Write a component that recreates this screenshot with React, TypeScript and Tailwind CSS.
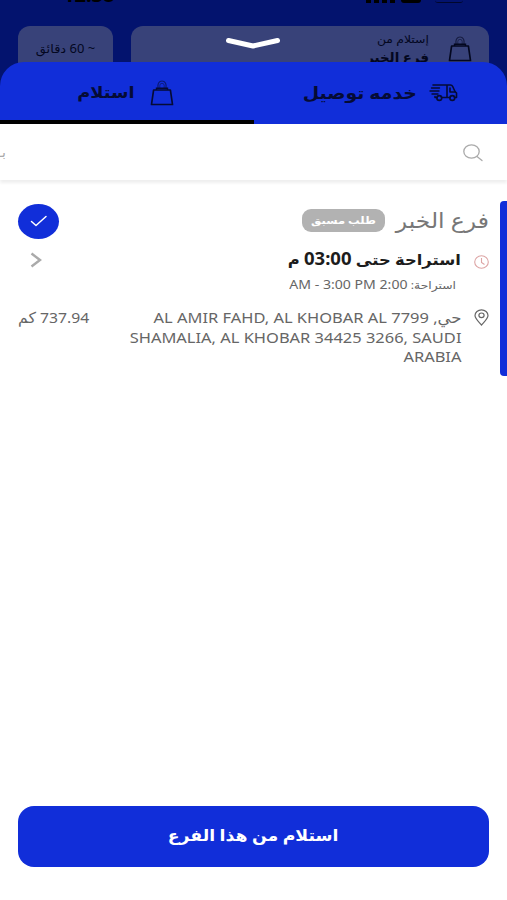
import type { ReactNode } from 'react';

const BagIcon = ({ className }: { className?: string }) => (
    <svg className={className} width="24" height="26" viewBox="0 0 24 26" fill="none" stroke="currentColor">
        <path d="M3.6 10h16.8L22.5 24.500h-21z" strokeWidth="1.7" strokeLinejoin="round" />
        <path d="M6.500 10V8.300h11V10" strokeWidth="1.4" />
        <path d="M8 8.300C7.200 4 9 1 12 1s4.800 3 4 7.300" strokeWidth="1.2" opacity="0.6" />
        <path d="M9.800 8V5.500a2.200 2.200 0 0 1 4.400 0V8" strokeWidth="0.8" opacity="0.6" />
    </svg>
);

const TruckIcon = () => (
    <svg className="mt-px" width="29" height="19" viewBox="0 0 29 19" fill="none" stroke="currentColor" strokeWidth="1.6" strokeLinejoin="round" strokeLinecap="round">
        <path d="M4 2h14v12.500h-5.500M18 2h3.500q1.500 0 2.200 1.500L26 8.500l1.500 1.500v4.500h-2M21 14.500h-4.500M8 14.500H6v-1" />
        <path d="M21 5v4h5" />
        <circle cx="10.300" cy="15" r="2.400" />
        <circle cx="23.300" cy="15" r="2.400" />
        <path d="M2.500 5h8M1 8h9M3 11h6" strokeWidth="1.400" />
    </svg>
);

interface TextProps {
    className: string;
    children: ReactNode;
}

const Text = ({ className, children }: TextProps) => (
    <span className={`block whitespace-nowrap ${className}`}>{children}</span>
);

const Header = () => (
    <div className="relative h-24 overflow-hidden bg-[#03136e] text-[#03071f]">
        <div dir="ltr" className="absolute left-[63px] -top-[17px] text-[20px] leading-6 font-bold text-black">
            12:38
        </div>
        <div className="absolute right-[44px] top-0 flex h-1 items-start gap-3.5">
            <div className="h-[3px] w-7 rounded-b border-b border-black/60" />
            <div className="h-[3px] w-5 rounded-b bg-black" />
            <div className="-mr-2 flex gap-[3px]">
                <div className="h-[3px] w-[5px] bg-black" />
                <div className="h-[3px] w-[5px] bg-black" />
                <div className="h-[3px] w-[5px] bg-black" />
                <div className="h-[3px] w-[5px] bg-black" />
            </div>
        </div>
        <div className="flex gap-[18px] px-[18px] pt-[26px]">
            <div className="flex h-20 flex-1 rounded-xl bg-[#384279] pr-[17px] pt-2.5">
                <BagIcon className="h-[26px] w-6" />
                <div className="pr-[19px]">
                    <Text className="-mt-[5px] origin-right scale-x-[1.13] text-[11px] leading-4">إستلام من</Text>
                    <Text className="origin-right scale-x-[1.03] text-[13px] leading-5 font-bold">فرع الخبر</Text>
                </div>
            </div>
            <div className="flex h-20 w-[95px] justify-center rounded-xl bg-[#384279] pt-[15px]">
                <Text className="scale-x-[1.08] text-xs leading-4">~ 60 دقائق</Text>
            </div>
        </div>
        <svg className="absolute left-[225px] top-[36px]" width="56" height="14" viewBox="0 0 56 14" fill="none" stroke="white" strokeWidth="5" strokeLinecap="round" strokeLinejoin="round">
            <path d="M3.500 4.500 28 10 52.500 4.500" />
        </svg>
    </div>
);

const Tabs = () => (
    <div className="relative -mt-[34px] flex h-[62px] rounded-t-[24px] bg-[#112ed9] text-[#050b35]">
        <div className="flex w-[253px] pr-[49px] pt-[20px]">
            <TruckIcon />
            <Text className="-mt-px mr-3 origin-right scale-x-[1.11] text-[17px] leading-6 font-bold">خدمه توصيل</Text>
        </div>
        <div className="flex flex-1 border-b-4 border-black pr-[80px] pt-[18px]">
            <BagIcon />
            <Text className="mr-[15px] origin-right scale-x-[1.11] text-[16px] leading-6 font-bold">استلام</Text>
        </div>
    </div>
);

const Search = () => (
    <div className="flex h-14 items-center justify-between overflow-hidden pr-[24px] shadow-[0_3px_3px_#efefef]">
        <svg className="mt-px" width="20" height="18" viewBox="0 0 20 18" fill="none" stroke="#aaa" strokeWidth="1.300" strokeLinecap="round">
            <ellipse cx="8.500" cy="7.500" rx="7.700" ry="6.700" />
            <path d="m14 12.500 5 4" />
        </svg>
        <Text className="-ml-[2px] text-sm text-[#aaa]">بـ</Text>
    </div>
);

const Branch = () => (
    <div className="relative mt-[21px] h-[175px] px-[18px] text-[#666]">
        <div className="absolute right-0 top-0 h-full w-[7px] rounded-l bg-[#112ed9]" />
        <div className="-mt-px mb-px flex h-10 items-center">
            <Text className="w-[93px] origin-right scale-x-[1.12] text-[21px] leading-8 text-[#777]">فرع الخبر</Text>
            <div className="mr-[11px] flex h-[23px] w-[83px] items-center justify-center rounded-[9px] bg-[#b2b2b2]">
                <Text className="scale-x-[1.1] text-[10.5px] leading-4 font-bold text-white">طلب مسبق</Text>
            </div>
            <div className="mr-auto mt-0.5 flex h-[35px] w-[41px] items-center justify-center rounded-[50%] bg-[#112ed9]">
                <svg width="18" height="12" viewBox="0 0 18 12" fill="none" stroke="white" strokeWidth="1.500" strokeLinecap="round" strokeLinejoin="round">
                    <path d="m1.500 6.500 4.500 4L16 1.500" />
                </svg>
            </div>
        </div>
        <div className="flex h-[38px] items-start pt-[6px]">
            <svg className="mt-[8px]" width="15" height="14" viewBox="0 0 15 14" fill="none" stroke="#dda5a5" strokeWidth="1.100">
                <ellipse cx="7.500" cy="7" rx="6.800" ry="6.200" />
                <path d="M7.500 3v4.500l3 2" />
            </svg>
            <Text className="mr-[13px] origin-right scale-x-[1.09] text-[15px] leading-6 font-bold text-[#1c1c1c]">
                استراحة حتى <span className="text-[17px]">03:00</span> م
            </Text>
            <svg className="mr-auto ml-[12px] mt-[5px]" width="12" height="16" viewBox="0 0 12 16" fill="none" stroke="#aaa" strokeWidth="2.400">
                <path d="m1.500 1.500 8.500 6.500-8.500 6.500" />
            </svg>
        </div>
        <Text className="-mt-0.5 mr-[33px] origin-right scale-x-[1.175] text-[10.5px] leading-4">
            استراحة: <span className="text-xs">2:00 AM - 3:00 PM</span>
        </Text>
        <div className="mt-[15px] flex items-start">
            <svg className="mt-[1px]" width="15" height="17" viewBox="0 0 15 17" fill="none" stroke="#666" strokeWidth="1.200">
                <path d="M7.500 16C4.500 12.500 1 9.500 1 6.500a6.500 5.700 0 0 1 13 0c0 3-3.500 6-6.500 9.500z" />
                <ellipse cx="7.500" cy="6.300" rx="2.600" ry="2.300" />
            </svg>
            <div className="mr-[13px] origin-right scale-x-[1.097] text-[15px] leading-[19.500px]">
                <Text className="">حي, 7799 AL AMIR FAHD, AL KHOBAR AL</Text>
                <Text className="">SHAMALIA, AL KHOBAR 34425 3266, SAUDI</Text>
                <Text className="">ARABIA</Text>
            </div>
            <Text className="mr-auto origin-left scale-x-[1.05] text-[15px] leading-[19.500px]">737.94 كم</Text>
        </div>
    </div>
);

const App = () => (
    <div dir="rtl" className="flex h-[900px] w-[507px] flex-col overflow-hidden bg-white font-['Noto_Sans','DejaVu_Sans',sans-serif]">
        <Header />
        <Tabs />
        <Search />
        <Branch />
        <button className="mx-[18px] mb-[33px] mt-auto flex h-[61px] items-center justify-center rounded-2xl bg-[#112ed9] text-white">
            <Text className="-mt-1 scale-x-[1.08] text-base leading-6 font-bold">استلام من هذا الفرع</Text>
        </button>
    </div>
);

export default App;
